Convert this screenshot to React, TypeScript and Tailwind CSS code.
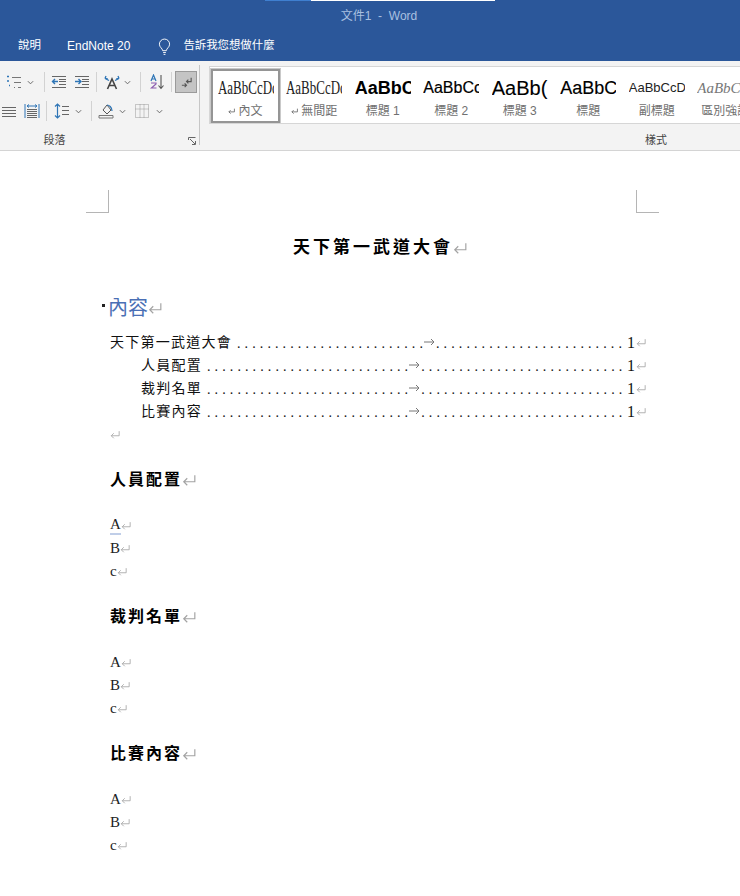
const bodyFont = { fontFamily: '"Liberation Serif", "Noto Sans CJK TC", serif' };

const Mark = ({ big = false, small = false }: { big?: boolean; small?: boolean }) => (
  <svg
    viewBox="0 0 12 10"
    className={
      big
        ? 'inline-block w-[14px] h-[12px] shrink-0'
        : small
          ? 'inline-block w-[7px] h-[6px] shrink-0'
          : 'inline-block w-[10px] h-[9px] shrink-0'
    }
    fill="none"
    stroke={small ? '#666' : '#a3a3a3'}
    strokeWidth={small ? 1.4 : 1}
  >
    <path d="M11 1v5.500H1.500M4.500 3.500l-3 3 3 3" />
  </svg>
);

const Chevron = ({ className = '' }: { className?: string }) => (
  <svg viewBox="0 0 8 5" className={`w-[7px] h-[5px] shrink-0 ${className}`} fill="none" stroke="#666" strokeWidth="1.1">
    <path d="M1 1l3 3 3-3" />
  </svg>
);

const Sep = ({ className = '' }: { className?: string }) => <div className={`w-px h-[20px] bg-[#d2d2d2] shrink-0 ${className}`} />;

const Icon = ({ children, className = '' }: { children: React.ReactNode; className?: string }) => (
  <svg viewBox="0 0 16 16" className={`w-[16px] h-[16px] shrink-0 ${className}`} fill="none" strokeWidth="1">
    {children}
  </svg>
);

const Lines = ({ x = 1, x2 = 15, ys }: { x?: number; x2?: number; ys: number[] }) => (
  <path d={ys.map((y) => `M${x} ${y + 0.5}H${x2}`).join('')} stroke="#666" />
);

const ParagraphGroup = () => (
  <div className="w-[199px] shrink-0 flex flex-col pt-[10px]">
    <div className="h-[22px] flex items-center pl-[6px]">
      <Icon>
        <path d="M1 2.500h2M1 7h2M3 11.500h1" stroke="#2e75b6" strokeWidth="1.4" />
        <path d="M6 3.500h9M8 8.500h7M8 13.500h1M12 13.500h3" stroke="#777" />
      </Icon>
      <Chevron className="ml-[5px]" />
      <Sep className="ml-[10px]" />
      <Icon className="ml-[6px]">
        <Lines ys={[2, 13]} />
        <Lines x={8} ys={[5, 7, 10]} />
        <path d="M7 7.500H1.500M4 5L1.500 7.500 4 10" stroke="#2e75b6" strokeWidth="1.4" />
      </Icon>
      <Icon className="ml-[7px]">
        <Lines ys={[2, 13]} />
        <Lines x={8} ys={[5, 7, 10]} />
        <path d="M1 7.500h6M4.500 5L7 7.500 4.500 10" stroke="#2e75b6" strokeWidth="1.4" />
      </Icon>
      <Sep className="ml-[6px]" />
      <Icon className="ml-[7px]">
        <path d="M3.500 15L8 5l4.500 10M5.500 11.500h5" stroke="#444" strokeWidth="1.6" />
        <path d="M1 4.500l4 2M1 4.500l1-2.500M1 4.500l2.700.2M15 4.500l-4 2M15 4.500l-1-2.500M15 4.500l-2.700.2" stroke="#2e75b6" strokeWidth="1.3" />
      </Icon>
      <Chevron className="ml-[4px]" />
      <Sep className="ml-[9px]" />
      <Icon className="ml-[8px]">
        <path d="M2 7l2.500-6L7 7M3 5h3" stroke="#2e75b6" strokeWidth="1.2" />
        <path d="M2 9h5v1l-4.500 4h5" stroke="#8e5fb0" strokeWidth="1.2" />
        <path d="M12 1v13M9.500 11.500L12 14.500l2.500-3" stroke="#555" strokeWidth="1.1" />
      </Icon>
      <Sep className="ml-[6px]" />
      <div className="ml-[3px] w-[22px] h-[22px] bg-[#c4c4c4] border border-[#9a9a9a] flex items-center justify-center">
        <svg viewBox="0 0 14 14" className="w-[13px] h-[13px]" fill="none" stroke="#555" strokeWidth="1.2">
          <path d="M12 2v4H7M9 4L7 6l2 2M2 10h5M5 8l2 2-2 2" />
        </svg>
      </div>
    </div>
    <div className="h-[22px] mt-[7px] flex items-center pl-[2px]">
      <svg viewBox="0 0 14 16" className="w-[14px] h-[16px] shrink-0" fill="none">
        <Lines x={0} x2={14} ys={[4, 7, 10, 13]} />
      </svg>
      <Icon className="ml-[8px]">
        <path d="M1 1v14M15 1v14" stroke="#2e75b6" />
        <Lines x={3} x2={13} ys={[6, 8, 10, 12, 14]} />
        <path d="M3 3h10M5 1.500L3 3l2 1.500M11 1.500L13 3l-2 1.500" stroke="#2e75b6" />
      </Icon>
      <Sep className="ml-[6px]" />
      <Icon className="ml-[7px]">
        <path d="M3.500 1v14M1 3.500L3.500 1 6 3.500M1 12.500L3.500 15 6 12.500" stroke="#2e75b6" strokeWidth="1.2" />
        <Lines x={8} ys={[3, 7, 11]} />
      </Icon>
      <Chevron className="ml-[5px]" />
      <Sep className="ml-[9px]" />
      <Icon className="ml-[6px]">
        <path d="M5 7l4-5 4 5-4 4z" stroke="#555" />
        <path d="M9 2c2 0 5 2 5 6" stroke="#2e75b6" strokeWidth="1.2" />
        <path d="M1 12.500h14v2.500H1z" fill="#f3f3f3" stroke="#777" />
      </Icon>
      <Chevron className="ml-[5px]" />
      <svg viewBox="0 0 14 14" className="w-[14px] h-[14px] ml-[9px] shrink-0" fill="none" stroke="#999" strokeDasharray="1 1">
        <path d="M.5.500h13v13H.5zM5 .5v13M9 .5v13M.5 5h13" />
      </svg>
      <Chevron className="ml-[7px]" />
    </div>
    <div className="h-[18px] mt-[9px] relative flex items-center justify-center pr-[90px] text-[11px] text-[#444]">
      段落
      <svg viewBox="0 0 8 8" className="absolute right-[3px] top-[6px] w-[8px] h-[8px]" fill="none" stroke="#666">
        <path d="M.5 3V.5H7.500M2 2l5 5M7.500 4v3.500H4" />
      </svg>
    </div>
  </div>
);

const styles = [
  { name: '內文', mark: true, sample: 'AaBbCcDc', cls: 'font-["Liberation_Serif"] text-[18px] text-[#222] scale-x-[0.72] origin-left w-[78px]' },
  { name: '無間距', mark: true, sample: 'AaBbCcDc', cls: 'font-["Liberation_Serif"] text-[18px] text-[#222] scale-x-[0.72] origin-left w-[78px]' },
  { name: '標題 1', sample: 'AaBbC', cls: 'font-["Liberation_Sans"] text-[18px] font-bold text-black' },
  { name: '標題 2', sample: 'AaBbCc', cls: 'font-["Liberation_Sans"] text-[16px] text-black [-webkit-text-stroke:0.2px_black]' },
  { name: '標題 3', sample: 'AaBb(', cls: 'font-["Liberation_Sans"] text-[20px] text-black [-webkit-text-stroke:0.1px_black]' },
  { name: '標題', sample: 'AaBbC', cls: 'font-["Liberation_Sans"] text-[18px] text-black [-webkit-text-stroke:0.15px_black]' },
  { name: '副標題', sample: 'AaBbCcD', cls: 'font-["Liberation_Sans"] text-[13px] text-[#222]' },
  { name: '區別強調', sample: 'AaBbCc', cls: 'font-["Liberation_Serif"] text-[15px] italic text-[#777]' },
];

const StylesGroup = () => (
  <div className="flex-1 min-w-0 ml-[9px] pt-[5px] flex flex-col">
    <div className="h-[58px] bg-white border-y border-l border-[#d6d6d6] flex pl-[1px] pt-[2px] overflow-hidden">
      {styles.map((s, i) => (
        <div
          key={s.name}
          className={
            i === 0
              ? 'w-[69px] h-[54px] shrink-0 border-2 border-[#959595] outline outline-[#c9c9c9] flex flex-col items-center bg-white'
              : 'w-[68.500px] h-[54px] shrink-0 border-2 border-transparent flex flex-col items-center'
          }
        >
          <div className="w-[56px] h-[34px] overflow-hidden flex items-center whitespace-nowrap">
            <div className={`shrink-0 ${s.cls}`}>{s.sample}</div>
          </div>
          <div className="h-[13px] -mt-px flex items-center gap-[3px] whitespace-nowrap text-[12px] text-[#707070]">
            {s.mark && <Mark small />}
            {s.name}
          </div>
        </div>
      ))}
    </div>
    <div className="h-[18px] mt-[7px] pl-[436px] text-[11px] leading-[18px] text-[#444]">樣式</div>
  </div>
);

const TocRow = ({ title, indent, dots1, dots2 }: { title: string; indent?: boolean; dots1: number; dots2: number }) => (
  <div className={`h-[23px] flex items-center whitespace-nowrap text-[14px] text-[#111] ${indent ? 'pl-[31px]' : ''}`}>
    <span className="tracking-[1.250px] w-fit">{title}</span>
    <span className="tracking-[4.100px] ml-[5px] leading-[23px] translate-y-[1px]">{'.'.repeat(dots1)}</span>
    <svg viewBox="0 0 11 8" className="w-[11px] h-[8px] shrink-0 -ml-[3px] -mt-[1px]" fill="none" stroke="#777">
      <path d="M0 4h10M7 1l3 3-3 3" />
    </svg>
    <span className="tracking-[4.100px] ml-[1px] leading-[23px] translate-y-[1px]">{'.'.repeat(dots2)}</span>
    <span className="ml-auto text-[16px] mr-px">1</span>
    <Mark />
  </div>
);

const LetterRow = ({ text, underline = false }: { text: string; underline?: boolean }) => (
  <div className="h-[23px] flex items-center text-[15px] text-[#222]">
    <span className={underline ? 'inline-block leading-[17px] w-[11px] border-b-2 border-[#c0cee8]' : ''}>{text}</span>
    <Mark />
  </div>
);

const Section = ({ title, underline = false }: { title: string; underline?: boolean }) => (
  <div>
    <div className="h-[30px] mt-[19px] flex items-center text-[16px] font-bold tracking-[2px] text-black">
      {title}
      <Mark big />
    </div>
    <div className="mt-[19px]">
      <LetterRow text="A" underline={underline} />
      <LetterRow text="B" />
      <LetterRow text="c" />
    </div>
  </div>
);

export default function App() {
  return (
    <div className="w-[740px] h-[896px] overflow-hidden bg-white" style={bodyFont}>
      <header className="bg-[#2b579a]" style={{ fontFamily: '"Liberation Sans", "Noto Sans CJK TC", sans-serif' }}>
        <div className="h-px flex pl-[265px]">
          <div className="w-[46px] bg-[#3f7fd0]" />
          <div className="w-[184px] bg-white" />
        </div>
        <div className="h-[30px] flex items-center justify-center text-[12px] text-[#a9c0e0] pl-[18px]">文件1&nbsp; -&nbsp; Word</div>
        <div className="h-[30px] flex items-center text-[12px] text-white">
          <span className="ml-[18px] text-[11.500px]">說明</span>
          <span className="ml-[26px]">EndNote 20</span>
          <svg viewBox="0 0 14 18" className="ml-[28px] w-[13px] h-[17px]" fill="none" stroke="#fff" strokeWidth="1">
            <path d="M5 13.500c0-2.500-3.500-3.500-3.500-7a5.500 5.500 0 0 1 11 0c0 3.500-3.500 4.500-3.500 7zM5.500 15.500h3M6 17.500h2" />
          </svg>
          <span className="ml-[12px] text-[11.400px]">告訴我您想做什麼</span>
        </div>
      </header>

      <section className="h-[90px] bg-[#f3f3f3] border-b border-[#d4d4d4] flex" style={{ fontFamily: '"Liberation Sans", "Noto Sans CJK TC", sans-serif' }}>
        <ParagraphGroup />
        <div className="w-px h-[80px] mt-[4px] bg-[#c6c6c6] shrink-0" />
        <StylesGroup />
      </section>

      <main className="ml-[86px] w-[573px]">
        <div className="mt-[39px] h-[23px] flex justify-between">
          <div className="w-[23px] border-r border-b border-[#b5b5b5]" />
          <div className="w-[23px] border-l border-b border-[#b5b5b5]" />
        </div>

        <div className="mt-[20px] h-[30px] flex items-center justify-center text-[17px] font-bold tracking-[3px] text-black pl-[15px]">
          天下第一武道大會
          <Mark big />
        </div>

        <div className="pl-[24px] w-[560px]">
          <div className="relative mt-[28px] h-[34px] -ml-[2px] flex items-center text-[20px] text-[#4a6fb5]">
            <span className="absolute -left-[6px] top-[13px] w-[3px] h-[3px] bg-[#222]" />
            內容
            <Mark big />
          </div>
          <div className="mt-[6px]">
            <TocRow title="天下第一武道大會" dots1={25} dots2={25} />
            <TocRow title="人員配置" indent dots1={27} dots2={27} />
            <TocRow title="裁判名單" indent dots1={27} dots2={27} />
            <TocRow title="比賽內容" indent dots1={27} dots2={27} />
            <div className="h-[23px] flex items-center">
              <Mark />
            </div>
          </div>
          <Section title="人員配置" underline />
          <Section title="裁判名單" />
          <Section title="比賽內容" />
        </div>
      </main>
    </div>
  );
}
